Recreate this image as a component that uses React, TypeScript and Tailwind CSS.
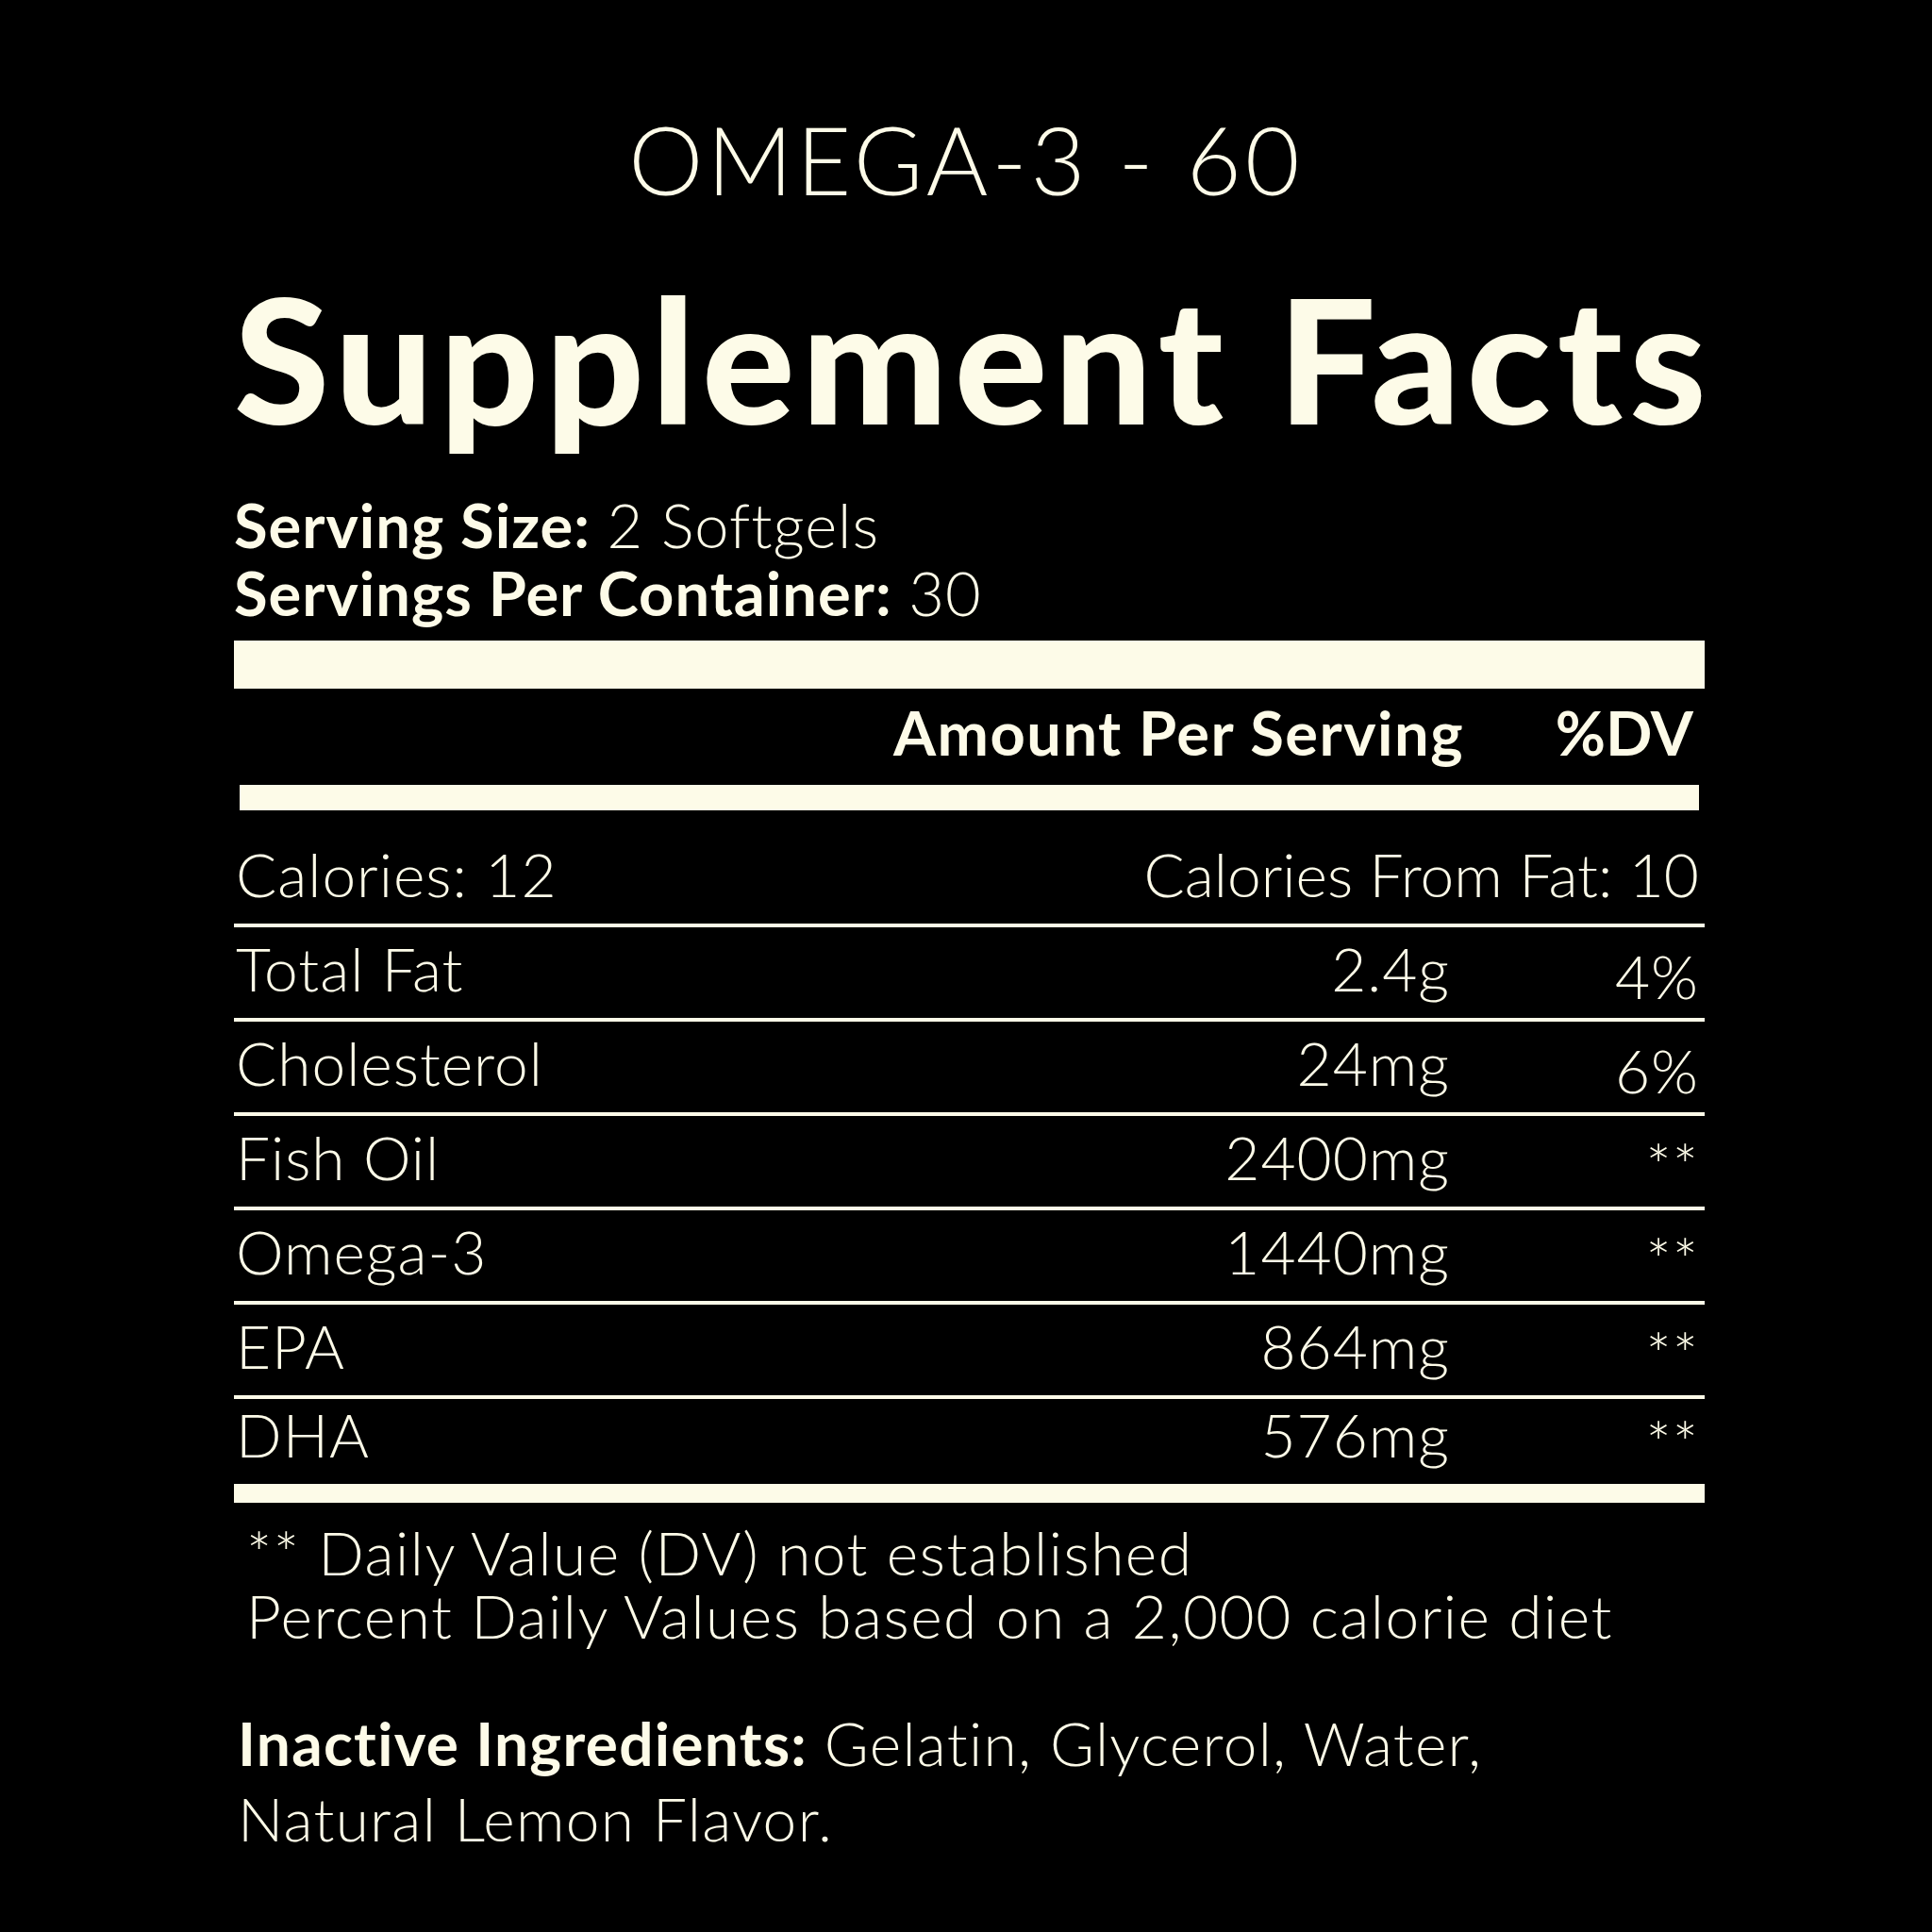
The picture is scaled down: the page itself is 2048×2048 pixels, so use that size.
const rows = [
  { name: 'Total Fat', amount: '2.4g', dv: '4%' },
  { name: 'Cholesterol', amount: '24mg', dv: '6%' },
  { name: 'Fish Oil', amount: '2400mg', dv: '**' },
  { name: 'Omega-3', amount: '1440mg', dv: '**' },
  { name: 'EPA', amount: '864mg', dv: '**' },
  { name: 'DHA', amount: '576mg', dv: '**' },
];

function FactRow({ name, amount, dv, last }: { name: string; amount: string; dv: string; last?: boolean }) {
  return (
    <div
      className={
        last
          ? 'flex h-[90px] items-end pb-[20px] text-[64px] font-light leading-none tracking-[1px]'
          : 'flex h-[100px] items-end border-b-4 border-[#fdfbe8] pb-[20px] text-[64px] font-light leading-none tracking-[1px]'
      }
    >
      <div className="flex-1 pl-[2px]">{name}</div>
      <div className="w-[300px] pr-[6px] text-right">{amount}</div>
      <div className="w-[264px] translate-y-[8px] pr-[6px] text-right">{dv}</div>
    </div>
  );
}

export default function App() {
  return (
    <div className="h-[2048px] w-[2048px] overflow-hidden bg-black font-['Lato',sans-serif] text-[#fdfbe8]">
      <div className="pt-[118px] text-center text-[100px] font-light leading-none tracking-[4px]">OMEGA-3 - 60</div>

      <div className="mx-[248px] w-[1559px]">
        <h1 className="mt-[69px] whitespace-nowrap text-[184px] font-black leading-none tracking-[7px]">
          Supplement Facts
        </h1>

        <div className="mt-[53px] text-[65px] leading-none tracking-[1px]">
          <span className="font-bold">Serving Size:</span> <span className="font-light">2 Softgels</span>
        </div>
        <div className="mt-[7px] text-[65px] leading-none tracking-[1px]">
          <span className="font-bold">Servings Per Container:</span> <span className="font-light">30</span>
        </div>

        <div className="mt-[18px] h-[51px] bg-[#fdfbe8]" />

        <div className="mt-[14px] flex text-[65px] font-bold leading-none">
          <div className="flex-1" />
          <div className="pr-[15px] text-right tracking-[1.5px]">Amount Per Serving</div>
          <div className="w-[240px] pr-[12px] text-right">%DV</div>
        </div>

        <div className="mx-[6px] mt-[23px] h-[27px] bg-[#fdfbe8]" />

        <div className="flex h-[124px] items-end justify-between border-b-4 border-[#fdfbe8] pb-[20px] text-[64px] font-light leading-none">
          <div className="pl-[2px] tracking-[1px]">Calories: 12</div>
          <div className="pr-[6px]">Calories From Fat: 10</div>
        </div>

        {rows.map((r, i) => (
          <FactRow key={r.name} {...r} last={i === rows.length - 1} />
        ))}
        <div className="h-[20px] bg-[#fdfbe8]" />

        <div className="mt-[19px] pl-[13px] text-[64px] font-light leading-[67px] tracking-[1.5px]">
          <div>** Daily Value (DV) not established</div>
          <div>Percent Daily Values based on a 2,000 calorie diet</div>
        </div>

        <div className="mt-[62px] pl-[4px] text-[64px] leading-[80px] tracking-[1.3px]">
          <span className="font-bold">Inactive Ingredients:</span>{' '}
          <span className="font-light">Gelatin, Glycerol, Water,</span>
          <br />
          <span className="font-light">Natural Lemon Flavor.</span>
        </div>
      </div>
    </div>
  );
}
